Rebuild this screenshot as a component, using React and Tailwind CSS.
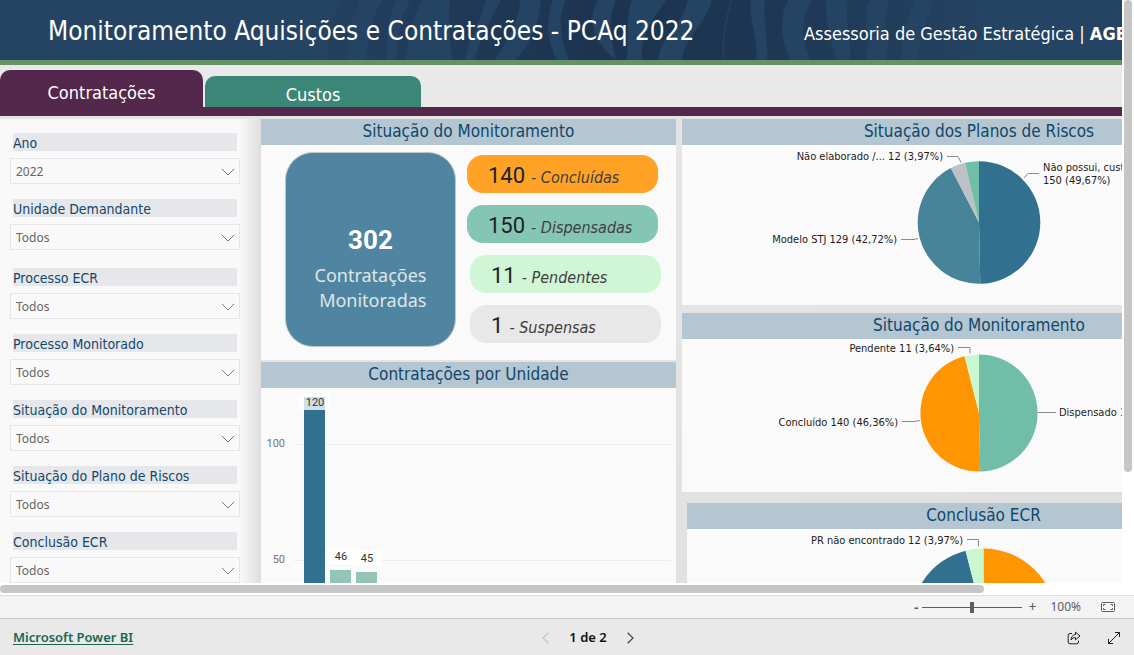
import { useState } from "react";

const filterGroups = [
  [
    { id: "ano", label: "Ano", value: "2022" },
    { id: "unidade", label: "Unidade Demandante", value: "Todos" }
  ],
  [
    { id: "processo-ecr", label: "Processo ECR", value: "Todos" },
    { id: "processo-monitorado", label: "Processo Monitorado", value: "Todos" },
    { id: "situacao", label: "Situação do Monitoramento", value: "Todos" },
    { id: "plano-riscos", label: "Situação do Plano de Riscos", value: "Todos" },
    { id: "conclusao", label: "Conclusão ECR", value: "Todos" }
  ]
];

const statusGroups = [
  [
    { count: 140, label: "Concluídas", className: "bg-[#ffa226]" },
    { count: 150, label: "Dispensadas", className: "bg-[#85c5b3]" }
  ],
  [
    { count: 11, label: "Pendentes", className: "bg-[#d0f6d5]" },
    { count: 1, label: "Suspensas", className: "bg-[#e8e8e8]" }
  ]
];

const unitBars = [
  { value: 120, color: "#31708f" },
  { value: 46, color: "#93c4b7" },
  { value: 45, color: "#93c4b7" }
];

const riskPie = {
  cx: 297,
  cy: 77.5,
  r: 61.3,
  slices: [
    { value: 150, color: "#31708f" },
    { value: 129, color: "#488499" },
    { value: 12, color: "#bdc0c4" },
    { value: 11, color: "#70bda8" }
  ],
  labels: [
    { x: 261, y: 15, anchor: "end", lines: ["Não elaborado /... 12 (3,97%)"], leader: "M265 11.5h11l3 6" },
    { x: 361, y: 26, anchor: "start", lines: ["Não possui, customizado", "150 (49,67%)"], leader: "M357 28.5h-11l-4 4.5" },
    { x: 215, y: 98, anchor: "end", lines: ["Modelo STJ 129 (42,72%)"], leader: "M219 94.5h13l4-1" }
  ]
};

const monitoringPie = {
  cx: 297,
  cy: 74,
  r: 58.6,
  slices: [
    { value: 150, color: "#70bda8" },
    { value: 140, color: "#ff9500" },
    { value: 12, color: "#c9f7cf" }
  ],
  labels: [
    { x: 272, y: 13, anchor: "end", lines: ["Pendente 11 (3,64%)"], leader: "M276 8.5h12v6" },
    { x: 377, y: 77, anchor: "start", lines: ["Dispensado 150 (49,67%)"], leader: "M356 73.5h18" },
    { x: 216, y: 87, anchor: "end", lines: ["Concluído 140 (46,36%)"], leader: "M220 82.5h12l6-1" }
  ]
};

const conclusionPie = {
  cx: 296.5,
  cy: 92,
  r: 72.5,
  slices: [
    { value: 151, color: "#ff9500" },
    { value: 139, color: "#31708f" },
    { value: 12, color: "#c9f7cf" }
  ],
  labels: [
    { x: 276, y: 15, anchor: "end", lines: ["PR não encontrado 12 (3,97%)"], leader: "M280 10.5h11.5v7" }
  ]
};

function slicePath(cx, cy, r, start, end) {
  const point = (turn) => {
    const angle = turn * Math.PI * 2 - Math.PI / 2;
    return `${cx + r * Math.cos(angle)} ${cy + r * Math.sin(angle)}`;
  };
  return `M${cx} ${cy}L${point(start)}A${r} ${r} 0 ${end - start > 0.5 ? 1 : 0} 1 ${point(end)}Z`;
}

function PieChart({ data, title, className }) {
  const { cx, cy, r, slices, labels } = data;
  const total = slices.reduce((sum, slice) => sum + slice.value, 0);
  let turn = 0;

  return <svg viewBox={`0 0 594 ${cy * 2}`} className={className} role="img" aria-label={title}>
      {slices.map((slice) => {
      const start = turn;
      turn += slice.value / total;
      return <path key={slice.color} d={slicePath(cx, cy, r, start, turn)} fill={slice.color} />;
    })}
      {labels.map((label) => <g key={label.lines[0]}>
          <path d={label.leader} fill="none" stroke="#8a8a8a" />
          {label.lines.map((line, index) => <text
        key={line}
        x={label.x}
        y={label.y + index * 13}
        textAnchor={label.anchor}
        className="fill-[#1c1c1c] text-[11px]"
      >
              {line}
            </text>)}
        </g>)}
    </svg>;
}

function UnitChart() {
  const base = 289;
  const scale = 2.335;

  return <svg viewBox="0 0 415 320" className="h-[320px] w-[415px] font-['Roboto',sans-serif]" role="img" aria-label="Contratações por Unidade">
      {[100, 50].map((tick) => <g key={tick}>
          <path d={`M33 ${Math.round(base - tick * scale)}.5H410`} stroke="#ececec" />
          <text x="24" y={Math.round(base - tick * scale) + 3} textAnchor="end" className="fill-[#777777] text-[11px]">{tick}</text>
        </g>)}
      {unitBars.map((bar, index) => {
      const top = Math.round(base - bar.value * scale);
      const x = 43 + index * 26;
      const labelY = Math.max(top - 22, 6);
      return <g key={bar.value}>
            <rect x={x} y={top} width="21" height={base - top} fill={bar.color} />
            <rect x={x - 5} y={labelY} width="31" height="16" rx="2" fill="#ffffff" fillOpacity="0.78" />
            <text x={x + 11} y={labelY + 12} textAnchor="middle" className="fill-[#333333] text-[11px]">{bar.value}</text>
          </g>;
    })}
    </svg>;
}

function Panel({ title, className, children }) {
  return <section className={`bg-[#fafafa] ${className}`}>
      <h2 className="h-[26px] bg-[#b3c6d1] text-center text-[17px] leading-6 text-[#12476b]">{title}</h2>
      {children}
    </section>;
}

function FilterSelect({ id, label, value }) {
  return <div>
      <label htmlFor={id} className="mx-[3px] block h-[18px] bg-[#e6e7eb] text-sm leading-5 text-[#12476b]">{label}</label>
      <div className="relative mt-[7px]">
        <select
          id={id}
          defaultValue={value}
          className="block h-[26px] w-full appearance-none border border-[#e6e6e6] bg-transparent px-[5px] pt-[2px] font-['Noto_Sans',sans-serif] text-xs text-[#666666]"
        >
          <option>{value}</option>
        </select>
        <svg viewBox="0 0 14 8" className="pointer-events-none absolute top-[10px] right-[5px] h-2 w-[14px]" fill="none" stroke="#777777">
          <path d="M.8.8 7 7l6.200-6.200" />
        </svg>
      </div>
    </div>;
}

function HeaderWaves() {
  return <svg viewBox="0 0 1280 60" className="absolute inset-0 h-full w-full" preserveAspectRatio="none" aria-hidden="true">
      <defs>
        <linearGradient id="waveFade">
          <stop offset="0" stopColor="#1c3450" stopOpacity="0" />
          <stop offset="0.3" stopColor="#1c3450" stopOpacity="0.75" />
          <stop offset="0.45" stopColor="#1c3450" />
          <stop offset="0.65" stopColor="#1c3450" stopOpacity="0.9" />
          <stop offset="1" stopColor="#1c3450" stopOpacity="0" />
        </linearGradient>
      </defs>
      <path d="M260 0H1010V60H260Z" fill="url(#waveFade)" />
      <g fill="#254463">
        <path d="M280 0h62c-12 20-16 40-14 60h-40c-6-20-8-40-8-60Z" />
        <path d="M360 0h22c-12 20-14 40-16 60h-20c2-22 4-42 14-60Z" />
        <path d="M396 0h14c-10 18-12 38-14 60h-10c0-22 2-42 10-60Z" />
        <path d="M422 0h28c-2 20 0 42 2 60h-46c2-20 6-42 16-60Z" />
        <path d="M486 0h15c-10 20-22 38-26 60h-10c4-22 16-40 21-60Z" />
        <path d="M520 0h21c-2 20-8 42-26 60h-21c14-20 25-38 26-60Z" />
        <path d="M553 0h13c-10 20-4 42 3 60h-12c-10-18-12-40-4-60Z" />
        <path d="M598 0h18c-10 24-4 42 0 60-18-14-32-38-18-60Z" />
        <path d="M632 0h34c-14 20-26 38-24 60h-15c2-22-2-42 5-60Z" />
        <path d="M688 0h24c-6 24-28 38-30 60h-24c2-22 26-38 30-60Z" />
        <path d="M731 0h1c-6 20-9 40-8 60h-1c-1-22 2-42 8-60Z" />
        <path d="M751 0h14c-2 24 4 42 2 60h-11c4-20-8-36-5-60Z" />
        <path d="M788 0h24c-12 20-10 40-2 60h-20c-8-20-12-40-2-60Z" />
        <path d="M826 0h22c-4 20 4 42 2 60h-14c-6-20-10-40-10-60Z" />
        <path d="M870 0h20c-10 20 2 42-4 60h-20c6-20-6-40 4-60Z" />
        <path d="M916 0h18c-8 20-14 40-16 60h-16c0-20 4-42 14-60Z" />
      </g>
    </svg>;
}

function App() {
  const [zoom, setZoom] = useState(100);

  return <div className="flex h-screen flex-col overflow-hidden bg-white font-['DejaVu_Sans_Condensed','DejaVu_Sans',sans-serif]">
      <div className="flex min-h-0 flex-1">
        <main className="min-w-0 flex-1 overflow-hidden">
          <div className="min-w-[1280px] bg-linear-to-br from-[#e4e4e4] via-[#e4e4e4] to-[#dcdcdc]">
            <header className="relative border-b-[5px] border-[#669266] bg-[#254463] text-white">
              <HeaderWaves />
              <div className="relative flex h-[60px] items-center pt-[2px]">
                <h1 className="flex-1 pl-12 text-[26px]">Monitoramento Aquisições e Contratações - PCAq 2022</h1>
                <p className="w-[476px] pt-[6px] text-lg">
                  Assessoria de Gestão Estratégica | <strong>AGE</strong>
                </p>
              </div>
            </header>

            <nav className="flex items-end gap-[2px] border-b-[9px] border-[#54274c] bg-[#e9e9e9] pt-[5px] text-lg leading-6 text-white">
              <button type="button" className="h-[37px] w-[203px] rounded-t-[10px] bg-[#54274c] pt-[9px]">Contratações</button>
              <button type="button" className="h-[31px] w-[216px] rounded-t-[10px] bg-[#3b8676] pt-[7px]">Custos</button>
            </nav>

            <div className="flex pt-[3px]">
              <aside className="flex w-[261px] shrink-0 flex-col gap-[18px] bg-linear-to-r from-[#f9f9f9] from-92% to-[#dedede] pt-[14px] pr-[21px] pl-[10px]">
                {filterGroups.map((group) => <div key={group[0].id} className="flex flex-col gap-[15px]">
                    {group.map((filter) => <FilterSelect key={filter.id} {...filter} />)}
                  </div>)}
              </aside>

              <div className="flex w-[415px] shrink-0 flex-col gap-[2px]">
                <Panel title="Situação do Monitoramento" className="h-[241px]">
                  <div className="flex gap-[11px] pt-[7px] pl-6">
                    <div className="flex h-[195px] w-[171px] flex-col items-center rounded-[28px] border border-[#c4c4c4] bg-[#4f85a0] pt-[69px]">
                      <p className="font-['Roboto',sans-serif] text-[26px] leading-9 font-bold text-white">302</p>
                      <p className="mt-[5px] text-right font-['Noto_Sans',sans-serif] text-lg leading-[25px] text-[#dfe6ea]">
                        Contratações
                        <br />
                        Monitoradas
                      </p>
                    </div>
                    <div className="flex flex-col gap-3 pt-[3px]">
                      {statusGroups.map((group, index) => <div key={group[0].label} className={index === 0 ? "flex flex-col gap-3" : "flex flex-col gap-3 pl-[3px]"}>
                          {group.map((status) => <p
                      key={status.label}
                      className={`flex h-[38px] w-[191px] items-baseline gap-[6px] rounded-2xl pt-[5px] pl-[21px] ${status.className}`}
                    >
                              <span className="font-['Roboto',sans-serif] text-[22px] leading-8 text-[#222222]">{status.count}</span>
                              <i className="text-base text-[#404040]">- {status.label}</i>
                            </p>)}
                        </div>)}
                    </div>
                  </div>
                </Panel>
                <Panel title="Contratações por Unidade" className="h-[356px]">
                  <UnitChart />
                </Panel>
              </div>

              <div className="flex min-w-0 flex-1 flex-col pr-1 pl-[6px]">
                <Panel title="Situação dos Planos de Riscos" className="mb-2 h-[186px]">
                  <PieChart data={riskPie} title="Situação dos Planos de Riscos" className="mx-auto h-[155px] w-[594px]" />
                </Panel>
                <Panel title="Situação do Monitoramento" className="mb-[11px] h-[179px]">
                  <PieChart data={monitoringPie} title="Situação do Monitoramento" className="mx-auto h-[148px] w-[594px]" />
                </Panel>
                <Panel title="Conclusão ECR" className="-mr-1 ml-[5px] h-[214px]">
                  <PieChart data={conclusionPie} title="Conclusão ECR" className="mx-auto h-[184px] w-[594px]" />
                </Panel>
              </div>
            </div>
          </div>
        </main>
        <div className="w-3 px-[2px]">
          <div className="h-[81%] rounded-full bg-[#c6c6c6]" />
        </div>
      </div>
      <div className="mr-3 h-3 py-[2px]">
        <div className="h-2 w-[87.7%] rounded-full bg-[#c6c6c6]" />
      </div>

      <div className="flex h-6 items-center justify-end border-y border-t-[#dddddd] border-b-[#c8c8c8] bg-[#f4f4f4] pr-[19px] font-['Noto_Sans',sans-serif] text-xs text-[#605e5c]">
        <button type="button" aria-label="Reduzir" className="mr-1 text-sm leading-5 font-semibold">-</button>
        <input
          type="range"
          aria-label="Zoom"
          min="0"
          max="200"
          value={zoom}
          onChange={(event) => setZoom(Number(event.target.value))}
          className="h-3 w-[100px] appearance-none bg-[linear-gradient(#605e5c,#605e5c)] bg-[length:100%_1px] bg-center bg-no-repeat [&::-webkit-slider-thumb]:h-[11px] [&::-webkit-slider-thumb]:w-1 [&::-webkit-slider-thumb]:appearance-none [&::-webkit-slider-thumb]:bg-[#605e5c]"
        />
        <button type="button" aria-label="Ampliar" className="ml-[6px] text-sm leading-5">+</button>
        <span className="ml-[14px]">{zoom}%</span>
        <button type="button" aria-label="Ajustar à página" className="ml-5">
          <svg viewBox="0 0 14 10" className="h-[10px] w-[14px]" fill="none" stroke="#605e5c">
            <rect x=".5" y=".5" width="13" height="9" rx="1" />
            <path d="M4.500 2.500h-2v1.500M2.500 6v1.500h2M9.500 2.500h2v1.500M11.500 6v1.500h-2" />
          </svg>
        </button>
      </div>

      <footer className="flex h-9 items-center bg-[#e9e9e9] px-[13px] pt-[2px] font-['Noto_Sans',sans-serif] text-[13px] font-semibold">
        <div className="flex-1">
          <a href="#powerbi" className="text-[#1c6555] underline underline-offset-2">Microsoft Power BI</a>
        </div>
        <nav className="flex items-center gap-5 pl-[42px] text-[#111111]">
          <button type="button" aria-label="Página anterior" disabled>
            <svg viewBox="0 0 7 12" className="h-3 w-[7px]" fill="none" stroke="#c4c4c4" strokeWidth="1.200">
              <path d="M6.400.8 1 6l5.400 5.200" />
            </svg>
          </button>
          <span>1 de 2</span>
          <button type="button" aria-label="Próxima página">
            <svg viewBox="0 0 7 12" className="h-3 w-[7px]" fill="none" stroke="#444444" strokeWidth="1.200">
              <path d="M.6.8 6 6 .6 11.200" />
            </svg>
          </button>
        </nav>
        <div className="flex flex-1 items-center justify-end gap-[26px]">
          <button type="button" aria-label="Compartilhar">
            <svg viewBox="0 0 14 14" className="h-[14px] w-[14px]" fill="none" stroke="#222222" strokeLinejoin="round">
              <path d="M5 2.500H3A1.800 1.800 0 0 0 1.200 4.300V11A1.800 1.800 0 0 0 3 12.800h6.700a1.800 1.800 0 0 0 1.800-1.800V9.700" />
              <path d="M8.500 1.200 13 5 8.500 8.800V6.700C6.500 6.500 5.200 7.500 4 9c.2-3 1.700-5.200 4.500-5.500Z" />
            </svg>
          </button>
          <button type="button" aria-label="Tela cheia">
            <svg viewBox="0 0 14 14" className="h-[14px] w-[14px]" fill="none" stroke="#222222">
              <path d="M1.500 12.500l11-11M8 1.500h4.500V6M1.500 8v4.500H6" />
            </svg>
          </button>
        </div>
      </footer>
    </div>;
}

export {
  App as default
};
